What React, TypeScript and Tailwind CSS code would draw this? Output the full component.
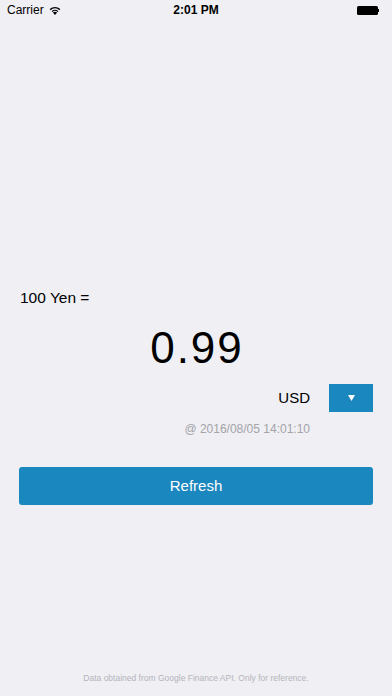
import React from "react";

function Wifi() {
  return (
    <svg width="12" height="9" viewBox="0 0 12 9" className="block">
      <path d="M6 9 L3.9 6.6 A3.1 3.1 0 0 1 8.1 6.6 Z" fill="#000" />
      <path d="M2.6 5.2 A4.9 4.9 0 0 1 9.4 5.2 L8.6 6.1 A3.7 3.7 0 0 0 3.4 6.1 Z" fill="#000" />
      <path d="M0.7 3.1 A7.6 7.6 0 0 1 11.3 3.1 L10.4 4.2 A6.2 6.2 0 0 0 1.6 4.2 Z" fill="#000" />
    </svg>
  );
}

export default function App() {
  return (
    <div
      className="relative w-[392px] h-[696px] bg-[#efeff4] text-black overflow-hidden flex flex-col"
      style={{ fontFamily: '"Liberation Sans", Arial, sans-serif' }}
    >
      {/* status bar */}
      <div className="relative h-5 flex items-center px-[7px] text-[12px] leading-none">
        <div className="flex items-center gap-[5px]">
          <span>Carrier</span>
          <Wifi />
        </div>
        <div className="absolute left-0 right-0 top-0 h-5 flex items-center justify-center font-semibold">
          2:01 PM
        </div>
        <div className="ml-auto flex items-center mr-[6px]">
          <div className="w-[21px] h-[9px] rounded-[1.5px] bg-black" />
          <div className="w-[1.5px] h-[3px] bg-black" />
        </div>
      </div>

      <div className="mt-[269px] px-5 text-[15.5px] leading-[18px]">100 Yen =</div>

      <div className="mt-[19px] text-center text-[44px] leading-[44px] tracking-[2px] pl-[2px]">0.99</div>

      <div className="mt-[14px] flex items-center justify-end pr-[19px] gap-[19px] h-7">
        <span className="text-[15px] leading-[18px]">USD</span>
        <div className="w-[44px] h-7 bg-[#1b87bf] flex items-center justify-center">
          <svg width="7" height="6" viewBox="0 0 7 6" className="block">
            <path d="M0 0 H7 L3.5 6 Z" fill="#fff" />
          </svg>
        </div>
      </div>

      <div className="mt-[10px] pr-[82px] text-right text-[12px] leading-[14px] text-[#a3a3a8]">
        @ 2016/08/05 14:01:10
      </div>

      <div className="mt-[31px] mx-[19px] h-[38px] rounded-[3px] bg-[#1b87bf] flex items-center justify-center text-white text-[15px]">
        Refresh
      </div>

      <div className="mt-auto mb-[13px] text-center text-[8.5px] leading-[10px] text-[#b5b5ba]">
        Data obtained from Google Finance API. Only for reference.
      </div>
    </div>
  );
}
